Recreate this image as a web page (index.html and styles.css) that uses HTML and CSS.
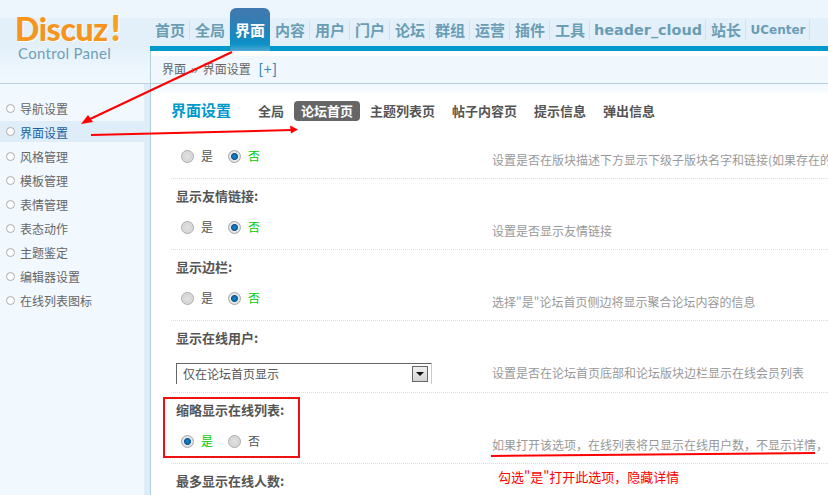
FILE: index.html
```html
<!DOCTYPE html>
<html lang="zh">
<head>
<meta charset="utf-8">
<title>Discuz! Control Panel</title>
<link rel="stylesheet" href="styles.css">
</head>
<body>
<div class="page">
  <header class="top">
    <div class="logo">
      <div class="logo-name">Discuz<span class="bang">!</span></div>
      <div class="logo-sub">Control Panel</div>
    </div>
    <div class="top-right">
      <nav class="nav">
        <a class="nav-item">首页</a>
        <a class="nav-item">全局</a>
        <a class="nav-item active">界面</a>
        <a class="nav-item">内容</a>
        <a class="nav-item">用户</a>
        <a class="nav-item">门户</a>
        <a class="nav-item">论坛</a>
        <a class="nav-item">群组</a>
        <a class="nav-item">运营</a>
        <a class="nav-item">插件</a>
        <a class="nav-item">工具</a>
        <a class="nav-item wide">header_cloud</a>
        <a class="nav-item">站长</a>
        <a class="nav-item uc">UCenter</a>
      </nav>
      <div class="crumb">
        <div class="crumb-inner">界面<span class="sep">»</span>界面设置<span class="plus">[+]</span></div>
      </div>
    </div>
  </header>
  <div class="body">
    <aside class="side">
      <ul class="menu">
        <li>导航设置</li>
        <li class="current">界面设置</li>
        <li>风格管理</li>
        <li>模板管理</li>
        <li>表情管理</li>
        <li>表态动作</li>
        <li>主题鉴定</li>
        <li>编辑器设置</li>
        <li>在线列表图标</li>
      </ul>
    </aside>
    <main class="main">
      <div class="head">
        <h1 class="title">界面设置</h1>
        <div class="tabs">
          <span class="tab">全局</span>
          <span class="tab on">论坛首页</span>
          <span class="tab">主题列表页</span>
          <span class="tab">帖子内容页</span>
          <span class="tab">提示信息</span>
          <span class="tab">弹出信息</span>
        </div>
      </div>
      <section class="row first">
        <div class="ctrl">
          <div class="opts"><i class="radio"></i><span class="opt">是</span><i class="radio on"></i><span class="opt green">否</span></div>
          <div class="desc">设置是否在版块描述下方显示下级子版块名字和链接(如果存在的</div>
        </div>
      </section>
      <section class="row">
        <div class="label">显示友情链接:</div>
        <div class="ctrl">
          <div class="opts"><i class="radio"></i><span class="opt">是</span><i class="radio on"></i><span class="opt green">否</span></div>
          <div class="desc">设置是否显示友情链接</div>
        </div>
      </section>
      <section class="row">
        <div class="label">显示边栏:</div>
        <div class="ctrl">
          <div class="opts"><i class="radio"></i><span class="opt">是</span><i class="radio on"></i><span class="opt green">否</span></div>
          <div class="desc">选择"是"论坛首页侧边将显示聚合论坛内容的信息</div>
        </div>
      </section>
      <section class="row tall">
        <div class="label">显示在线用户:</div>
        <div class="ctrl">
          <div class="opts"><div class="select"><span class="select-text">仅在论坛首页显示</span><span class="select-btn"></span></div></div>
          <div class="desc">设置是否在论坛首页底部和论坛版块边栏显示在线会员列表</div>
        </div>
      </section>
      <section class="row">
        <div class="label">缩略显示在线列表:</div>
        <div class="ctrl">
          <div class="opts"><i class="radio on"></i><span class="opt green">是</span><i class="radio"></i><span class="opt">否</span></div>
          <div class="desc">如果打开该选项，在线列表将只显示在线用户数，不显示详情，</div>
        </div>
      </section>
      <section class="row">
        <div class="label">最多显示在线人数:</div>
      </section>
      <div class="note">勾选"是"打开此选项，隐藏详情</div>
    </main>
  </div>
  <div class="redbox"></div>
  <svg class="marks" width="828" height="495" viewBox="0 0 828 495" aria-hidden="true">
    <g fill="none" stroke="#f00" stroke-width="2">
      <path d="M232 52 88 120"/>
      <path d="M91 135 292 130"/>
      <path d="M491 456 815 453"/>
    </g>
    <path d="M81 124 88 115 93 122Z" fill="#f00"/>
    <path d="M298 129.500 290 125.500 291 133.500Z" fill="#f00"/>
  </svg>
</div>
</body>
</html>
```
FILE: styles.css
```css
* { box-sizing: border-box; }
html, body { margin: 0; padding: 0; }
body { background: #fff; font-family: "Noto Sans CJK SC", "Liberation Sans", sans-serif; font-size: 12px; color: #666; }
.page { position: relative; width: 828px; height: 495px; overflow: hidden; }

.top { display: flex; height: 84px; background: linear-gradient(#eef6fd 0, #eef6fd 18px, #e3f0fa 18px, #e3f0fa 46px, #f0f8fe 78px); border-bottom: 1px solid #b8d2dc; }
.logo { width: 150px; padding: 9px 0 0 15px; flex: none; }
.logo-name { font-family: "Lato", sans-serif; font-weight: 900; font-size: 32px; line-height: 36px; letter-spacing: -.4px; color: #f7941d; text-shadow: 1px 1px 0 #fff; white-space: nowrap; }
.bang { color: #f9a11b; font-size: 36px; margin-left: 3px; }
.logo-sub { font-family: "Lato", sans-serif; font-size: 15px; line-height: 18px; margin: -3px 0 0 3px; color: #6fa0b6; letter-spacing: .3px; }

.top-right { flex: 1; display: flex; flex-direction: column; min-width: 0; }
.nav { display: flex; height: 51px; padding-top: 8px; border-bottom: 5px solid #0099cc; align-items: stretch; }
.nav-item { width: 40px; padding: 10px 0 0; height: 38px; font-size: 15px; font-weight: 700; line-height: 24px; color: #6a9db4; text-align: center; position: relative; }
.nav-item::after { content: ""; position: absolute; right: 0; top: 12px; width: 1px; height: 20px; background: #d2e2ec; }
.nav-item.active { height: 43px; color: #fff; border-radius: 6px 6px 0 0; background: linear-gradient(#3f79b1 0, #3a7bb0 8px, #1f86bd 24px, #0b90c6 36px, #52a9d3 43px); }
.nav-item.active::after { display: none; }
.nav-item.wide { width: 116px; font-family: "DejaVu Sans", sans-serif; font-size: 14.4px; }
.nav-item.uc { width: 64px; font-family: "DejaVu Sans", sans-serif; font-size: 12px; }

.crumb { flex: 1; border-left: 1px solid #b8d2dc; background: #fff; padding-top: 5px; }
.crumb-inner { height: 27px; background: #f0f8fe; padding-left: 11px; font-size: 12px; line-height: 25px; color: #666; white-space: nowrap; }
.sep { margin: 0 5px; color: #888; font-family: "Liberation Sans", sans-serif; }
.plus { color: #3b87b8; margin-left: 8px; font-size: 14px; letter-spacing: 1px; font-family: "Liberation Sans", sans-serif; }

.body { display: flex; height: 411px; }
.side { width: 150px; flex: none; background: #f1f9fe; border-right: 6px solid #deedf8; padding-top: 13px; }
.menu { list-style: none; margin: 0; padding: 0; }
.menu li { height: 24px; padding-left: 20px; line-height: 23px; font-size: 12px; color: #666; position: relative; }
.menu li::before { content: ""; position: absolute; left: 6px; top: 7px; width: 7px; height: 7px; border-radius: 50%; background: #fff; border: 1px solid #aaa; }
.menu li.current { background: #deedf8; color: #1c5f9f; height: 21px; margin-bottom: 3px; }
.menu li.current::before { top: 6px; }

.main { flex: 1; min-width: 0; position: relative; border-left: 1px solid #b0cfdd; padding-left: 20px; background: linear-gradient(#f0f8fe 0, #fff 12px); }
.head { height: 57px; display: flex; padding-top: 16px; align-items: flex-start; }
.title { margin: 0; width: 87px; font-size: 15px; line-height: 20px; font-weight: 700; color: #0099cc; }
.tabs { display: flex; margin-top: 1px; }
.tab { font-size: 13px; font-weight: 700; line-height: 20px; padding: 0 10px 0 0; margin-right: 16px; color: #555; white-space: nowrap; }
.tab:first-child { margin-right: 0; }
.tab.on { background: #666; color: #fff; border-radius: 4px; padding: 0 7px; margin-right: 10px; }
.tab:nth-child(3) { padding-right: 0; margin-right: 17px; }
.tab:nth-child(4) { padding-right: 0; margin-right: 17px; }
.tab:nth-child(5) { padding-right: 0; margin-right: 17px; }

.row { height: 71px; border-bottom: 1px dotted #cfe0ec; padding-top: 6px; }
.row.first { height: 38px; padding-top: 0; }
.row.tall { height: 72px; }
.label { height: 22px; padding-left: 5px; font-size: 13px; font-weight: 700; line-height: 22px; color: #555; }
.ctrl { display: flex; margin-top: 5px; height: 30px; white-space: nowrap; overflow: hidden; }
.row.first .ctrl { margin-top: 0; }
.opts { width: 321px; flex: none; display: flex; align-items: center; padding-left: 5px; font-size: 12px; }
.desc { line-height: 37px; color: #999; font-size: 12px; }
.radio { width: 13px; height: 13px; margin: 0 0 0 5px; flex: none; border-radius: 50%; border: 1px solid #a8a8a8; background: radial-gradient(circle at 50% 50%, #e2e2e2 0, #d6d6d6 55%, #f2f2f2 100%); }
.radio.on { background: radial-gradient(circle at 50% 50%, #1d86c8 0, #0a5d98 40%, #ececec 50%, #c8c8c8 100%); }
.opt { margin: 0 10px 0 7px; line-height: 20px; color: #555; }
.green { color: #00cc00; }
.select { display: flex; width: 256px; height: 22px; margin: 10px 0 0 0; border: 1px solid #666; border-right-color: #ccc; border-bottom-color: #ccc; align-items: center; justify-content: space-between; padding: 0 3px 0 6px; background: #fff; font-size: 12px; color: #555; }
.select-text { line-height: 20px; }
.select-btn { width: 16px; height: 16px; border: 1px solid #666; background: linear-gradient(#f0f0f0, #d4d4d4); position: relative; }
.select-btn::after { content: ""; position: absolute; left: 3px; top: 5px; border: 4px solid transparent; border-top-color: #111; border-bottom-width: 0; }

.note { position: absolute; left: 347px; top: 384px; font-size: 13px; line-height: 18px; color: #f00; white-space: nowrap; }
.redbox { position: absolute; left: 163px; top: 397px; width: 137px; height: 61px; border: 2px solid #ee1111; }
.marks { position: absolute; left: 0; top: 0; pointer-events: none; }
```
